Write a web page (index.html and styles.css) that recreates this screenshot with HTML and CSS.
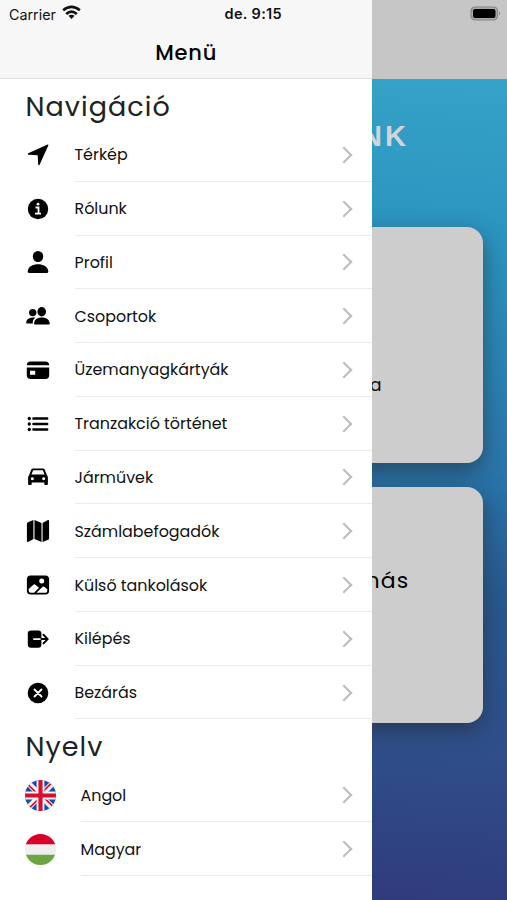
FILE: index.html
```html
<!DOCTYPE html>
<html lang="hu">
<head>
<meta charset="utf-8">
<title>Menü</title>
<link rel="stylesheet" href="styles.css">
</head>
<body>
<main class="home">
  <div class="home-bar">
    <svg class="battery" viewBox="0 0 32 16"><rect x="1" y="1" width="26.5" height="13" rx="4" fill="#aaa" stroke="#858585" stroke-width="1.2"/><rect x="3" y="3" width="22.5" height="9" rx="2" fill="#000"/><path d="M29 5.5q2.2 2 0 4z" fill="#858585"/></svg>
  </div>
  <h2 class="home-title">NK</h2>
  <section class="card card-first"><span>a</span></section>
  <section class="card card-second"><span>más</span></section>
</main>
<aside class="menu">
  <header class="menu-header">
    <div class="status"><span>Carrier</span>
      <svg class="wifi" viewBox="0 0 20 15"><g fill="none" stroke="#111" stroke-width="2.8"><path d="M1.2 5.2Q10-2 18.8 5.2"/><path d="M4.4 9Q10 4.2 15.6 9"/></g><path d="M6.8 11Q10 8.5 13.2 11L10 14.3z" fill="#111"/></svg>
      <b class="clock">de. 9:15</b>
    </div>
    <h1>Menü</h1>
  </header>
  <h2 class="group-title">Navigáció</h2>
  <ul class="list">
    <li><svg class="icon" viewBox="0 0 24 24"><path d="M21.6 1.6Q22.8 1.4 22.3 2.6L13.6 21.8Q12.6 23 12.2 21.6L11.7 12.3 2.4 11.8Q1 11.2 2.2 10.3z"/></svg><div class="row"><span>Térkép</span><i class="chevron"></i></div></li>
    <li><svg class="icon" viewBox="0 0 24 24"><circle cx="12" cy="12" r="10.2"/><path d="M9.5 10.5h3v6M9 16.6h6" fill="none" stroke="#fff" stroke-width="1.8"/><circle cx="12" cy="7.2" r="1.4" fill="#fff"/></svg><div class="row"><span>Rólunk</span><i class="chevron"></i></div></li>
    <li><svg class="icon" viewBox="0 0 24 24"><ellipse cx="12" cy="6.5" rx="5.2" ry="5.5"/><path d="M1.7 21.6C2 16.5 7 14.2 12 14.2s10 2.3 10.3 7.4q0 1.4-1.3 1.4H3q-1.3 0-1.3-1.4z"/></svg><div class="row"><span>Profil</span><i class="chevron"></i></div></li>
    <li><svg class="icon" viewBox="0 0 24 24"><circle cx="6.7" cy="8.6" r="3.7"/><path d="M.2 18.5C.7 14.5 4 13.2 9.5 13.6 7.4 15 6.7 17 6.8 19.4H1.2q-1 0-1-.9z"/><ellipse cx="15.7" cy="7.7" rx="4.3" ry="4.7"/><path d="M8 19.4C8.5 15 12 13.5 15.8 13.5s7.3 1.5 8 5.9q0 1.1-1 1.1H9q-1 0-1-1.1z"/></svg><div class="row"><span>Csoportok</span><i class="chevron"></i></div></li>
    <li><svg class="icon" viewBox="0 0 24 24"><path d="M.8 7.2Q.8 3.4 4.6 3.4h14.8q3.8 0 3.8 3.8z"/><path fill-rule="evenodd" d="M.8 9.6h22.4V17q0 4-3.8 4H4.6Q.8 21 .8 17zm3.2 3.2v4h5.2v-4z"/></svg><div class="row"><span>Üzemanyagkártyák</span><i class="chevron"></i></div></li>
    <li><svg class="icon" viewBox="0 0 24 24"><g fill="none" stroke="#000" stroke-width="2.4" stroke-linecap="round"><path d="M7.4 6.5h13.8M7.4 12h13.8M7.4 17.5h13.8"/></g><circle cx="3.3" cy="6.5" r="1.7"/><circle cx="3.3" cy="12" r="1.7"/><circle cx="3.3" cy="17.5" r="1.7"/></svg><div class="row"><span>Tranzakció történet</span><i class="chevron"></i></div></li>
    <li><svg class="icon" viewBox="0 0 24 24"><path fill-rule="evenodd" d="M5.2 4.7Q5.7 3.4 7 3.4h10q1.3 0 1.8 1.3l2.1 5.5q1 .8 1 2.3V19q0 1-1 1h-1.6q-1 0-1-1v-1.4H5.7V19q0 1-1 1H3.1q-1 0-1-1v-6.5q0-1.5 1-2.3zM5.4 9.5h13.2l-1.8-4.2H7.2zM6.3 12.2a1.5 1.5 0 1 0 .1 0zm11.3 0a1.5 1.5 0 1 0 .1 0z"/></svg><div class="row"><span>Járművek</span><i class="chevron"></i></div></li>
    <li><svg class="icon" viewBox="0 0 24 24"><path d="M7.4.9v19L2.1 23Q.9 23.3.9 22V4.8q0-1 1-1.5zM8.5.9l7 3.1v19l-7-3.1zM16.6 23V4l5.3-3q1.2-.3 1.2 1v17.3q0 1-1 1.5z"/></svg><div class="row"><span>Számlabefogadók</span><i class="chevron"></i></div></li>
    <li><svg class="icon" viewBox="0 0 24 24"><rect x=".9" y="2.5" width="22.2" height="19" rx="3.8"/><circle cx="15.7" cy="7.9" r="2.5" fill="#fff"/><path d="M2.7 16 7.1 11.9Q8.4 10.8 9.7 11.9L13 14.8 8.1 19.8H5Q2.7 19.8 2.7 17.4zM10.4 19.8l6-5.9q1.1-.9 2.2 0l2.7 2.3v1q0 2.6-2.5 2.6z" fill="#fff"/></svg><div class="row"><span>Külső tankolások</span><i class="chevron"></i></div></li>
    <li><svg class="icon" viewBox="0 0 24 24"><rect x="1.8" y="3.4" width="13.6" height="17.4" rx="3.2"/><path d="M7.2 12.1h8.2" stroke="#fff" stroke-width="1.7"/><path d="M15.4 12.1h6M17.5 7.8l4.2 4.3-4.2 4.3" fill="none" stroke="#000" stroke-width="2" stroke-linecap="round" stroke-linejoin="round"/></svg><div class="row"><span>Kilépés</span><i class="chevron"></i></div></li>
    <li><svg class="icon" viewBox="0 0 24 24"><circle cx="12" cy="12" r="10.3"/><path d="m8.5 8.5 7 7m0-7-7 7" fill="none" stroke="#fff" stroke-width="1.8" stroke-linecap="round"/></svg><div class="row"><span>Bezárás</span><i class="chevron"></i></div></li>
  </ul>
  <h2 class="group-title">Nyelv</h2>
  <ul class="list">
    <li><svg class="flag" viewBox="0 0 30 30"><clipPath id="c"><circle cx="15" cy="15" r="15"/></clipPath><g clip-path="url(#c)"><path fill="#0f4dad" d="M0 0h30v30H0z"/><path d="m0 0 30 30M30 0 0 30" stroke="#f4f4f4" stroke-width="5.5"/><path d="M3 4.4 13 14.4M27 25.6 17 15.6M25.6 3l-10 10M4.4 27l10-10" stroke="#d80f30" stroke-width="1.6"/><path d="M15 0v30M0 15h30" stroke="#f4f4f4" stroke-width="7.6"/><path d="M15 0v30M0 15h30" stroke="#d80f30" stroke-width="4"/></g></svg><div class="row"><span>Angol</span><i class="chevron"></i></div></li>
    <li><svg class="flag" viewBox="0 0 30 30"><g clip-path="url(#c)"><path fill="#efefef" d="M0 0h30v30H0z"/><path fill="#d80027" d="M0 0h30v10H0z"/><path fill="#6da544" d="M0 20h30v10H0z"/></g></svg><div class="row"><span>Magyar</span><i class="chevron"></i></div></li>
  </ul>
</aside>
</body>
</html>
```
FILE: styles.css
```css
* { box-sizing: border-box; }
body {
  margin: 0;
  width: 507px;
  height: 900px;
  overflow: hidden;
  position: relative;
  font-family: Poppins, Inter, sans-serif;
  color: #111;
}
h1, h2, ul { margin: 0; padding: 0; font-weight: 400; }
ul { list-style: none; }

.home {
  height: 900px;
  background: linear-gradient(184deg, #36a2c7 9%, #2a93bf 27%, #2a76ab 50%, #28598f 64%, #2f4f8b 80%, #303a7c 98%);
}
.home-bar {
  height: 79px;
  background: #c6c6c6;
  display: flex;
  justify-content: flex-end;
  padding: 6px 5px 0 0;
}
.battery { width: 32px; height: 16px; }
.home-title {
  height: 148px;
  padding: 40px 98px 0 0;
  text-align: right;
  font: bold 29px/34px "Liberation Sans", sans-serif;
  letter-spacing: 3px;
  color: #d1d5d8;
}
.card {
  height: 235.5px;
  margin: 0 24.5px 24.5px;
  border-radius: 16px;
  background: #cdcdcd;
  box-shadow: 0 8px 22px rgba(35, 45, 55, .6);
  display: flex;
  justify-content: flex-end;
}
.card-first { padding: 147px 101px 0 0; font-size: 17px; line-height: 22px; }
.card-second { padding: 79px 73px 0 0; font-size: 22px; line-height: 30px; letter-spacing: 1.2px; color: #000; }

.menu {
  position: absolute;
  inset: 0 auto 0 0;
  width: 372.4px;
  background: #fff;
}
.menu-header {
  height: 79px;
  background: #f7f7f7;
  border-bottom: 1px solid #dedede;
}
.status {
  height: 28px;
  padding-left: 9px;
  display: flex;
  align-items: center;
  font: 14.3px Inter, sans-serif;
}
.status span { width: 48px; }
.wifi { width: 19px; height: 15px; margin: -3px 0 0 5px; }
.clock { margin-left: 143.5px; margin-top: -1px; font-weight: 600; font-size: 14.5px; letter-spacing: .35px; }
.menu-header h1 {
  font-size: 21px;
  line-height: 49px;
  font-weight: 500;
  letter-spacing: .8px;
  text-align: center;
  color: #000;
}
.group-title {
  height: 49px;
  padding-left: 25.5px;
  font-size: 27px;
  line-height: 56px;
  letter-spacing: 1.05px;
  color: #222;
}

.list li { display: flex; align-items: center; height: 53.77px; padding-left: 26px; }
.icon { width: 24px; height: 24px; flex: none; margin-right: 24.5px; }
.flag { width: 31px; height: 31px; flex: none; margin: 0 24.5px 0 -1px; }
.row {
  flex: 1;
  height: 100%;
  display: flex;
  align-items: center;
  justify-content: space-between;
  padding: 1px 19px 0 0;
  border-bottom: 1px solid #ebebeb;
  font-size: 15.9px;
}
.row span { white-space: nowrap; }
.chevron {
  width: 12px;
  height: 12px;
  margin-right: 3.5px;
  border: solid #bcbcbc;
  border-width: 2px 2px 0 0;
  transform: rotate(45deg);
}
```
